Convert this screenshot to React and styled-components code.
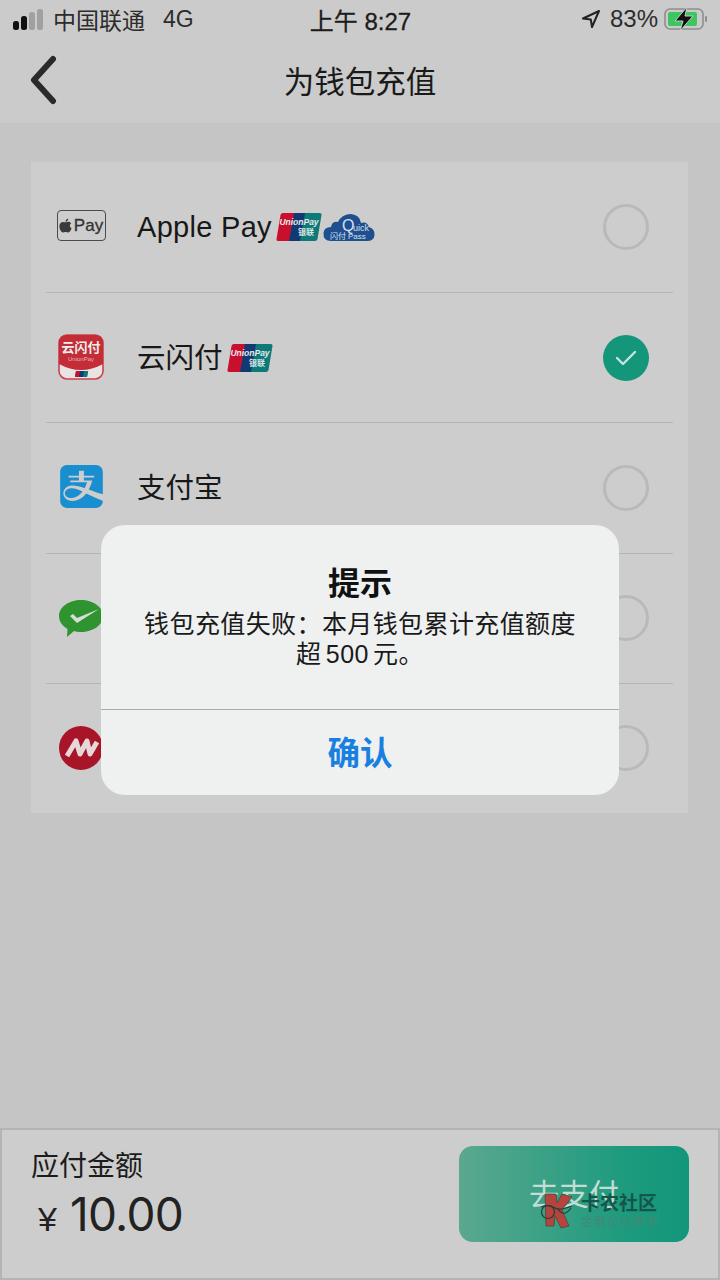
import React from 'react'
import styled, { createGlobalStyle } from 'styled-components'
import { SiAlipay } from 'react-icons/si'

const Global = createGlobalStyle`
    html, body { margin: 0; padding: 0; background: #c5c5c5; }
    body { font-family: "Liberation Sans", "Noto Sans CJK SC", sans-serif; }
`
const Page = styled.div`
    position: relative;
    width: 720px;
    height: 1280px;
    overflow: hidden;
    display: flex;
    flex-direction: column;
    background: #c5c5c5;
    color: #141414;
`
const Top = styled.div`
    height: 123px;
    background: #cbcbcb;
    display: flex;
    flex-direction: column;
`
const StatusBar = styled.div`
    height: 40px;
    display: grid;
    grid-template-columns: 1fr auto 1fr;
    align-items: center;
    padding: 0 12px 2px 13px;
    box-sizing: border-box;
    font-size: 23px;
    color: #2c2c2c;
`
const Carrier = styled.div`
    display: flex;
    align-items: center;
    gap: 9px;
    span + span { margin-left: 9px; }
`
const Clock = styled.div`
    font-size: 24px;
    color: #1c1c1c;
    -webkit-text-stroke: 0.3px #1c1c1c;
`
const StatusRight = styled.div`
    display: flex;
    justify-content: flex-end;
    align-items: center;
    gap: 6px;
    font-size: 24px;
    span { margin-left: 3px; }
`
const Nav = styled.div`
    flex: 1;
    position: relative;
    display: flex;
    align-items: center;
    justify-content: center;
    padding-bottom: 3px;
`
const Title = styled.div`
    font-size: 30.5px;
    color: #1a1a1a;
`
const Back = styled.svg`
    position: absolute;
    left: 28px;
    top: 15px;
`
const Main = styled.div`
    flex: 1;
    padding: 39px 32px 0 31px;
`
const Card = styled.div`
    background: #cdcdcd;
    padding: 0 15px;
`
const Row = styled.div`
    height: 130.2px;
    display: flex;
    align-items: center;
    border-top: ${p => p.first ? 'none' : '1px solid #b6b6b6'};
    padding: 0 24px 0 10px;
    box-sizing: border-box;
`
const IconSlot = styled.div`
    width: 50px;
    height: 50px;
    margin-right: 31px;
    padding-bottom: ${p => p.lift || 0}px;
    box-sizing: border-box;
    display: flex;
    align-items: center;
    justify-content: center;
`
const Label = styled.div`
    font-size: ${p => p.latin ? '29px' : '28.5px'};
    letter-spacing: ${p => p.latin ? '0.3px' : '0'};
    color: #181818;
    margin: ${p => p.latin ? '0 4px 0 0' : '0 4px 4px 0'};
`
const Badges = styled.div`
    display: flex;
    align-items: center;
    gap: 1px;
`
const Radio = styled.div`
    margin-left: auto;
    width: 46px;
    height: 46px;
    box-sizing: border-box;
    border-radius: 50%;
    border: ${p => p.on ? 'none' : '3px solid #b9b9b9'};
    background: ${p => p.on ? '#14967a' : 'transparent'};
    display: flex;
    align-items: center;
    justify-content: center;
`
const PayBadge = styled.div`
    flex: none;
    width: 49px;
    height: 31px;
    box-sizing: border-box;
    border: 1.5px solid #4a4a4a;
    border-radius: 4px;
    display: flex;
    align-items: center;
    justify-content: center;
    gap: 2px;
    font-size: 17px;
    color: #333;
    -webkit-text-stroke: 0.3px #333;
`
const Footer = styled.div`
    height: 152px;
    box-sizing: border-box;
    background: #cdcdcd;
    border: 2px solid #b4b4b4;
    display: flex;
    align-items: flex-start;
    justify-content: space-between;
    padding: 16px 29px 0 29px;
`
const Amounts = styled.div`
    display: flex;
    flex-direction: column;
    padding-top: 2px;
`
const AmountLabel = styled.div`
    font-size: 28px;
    color: #1c1c1c;
    line-height: 38px;
`
const Amount = styled.div`
    display: flex;
    align-items: baseline;
    padding-left: 7px;
    gap: 13px;
    line-height: 56px;
    color: #222;
`
const Yen = styled.span`
    font-size: 34px;
`
const Value = styled.span`
    font-family: "Inter", "Liberation Sans", sans-serif;
    font-size: 46px;
    letter-spacing: -0.7px;
`
const PayButton = styled.div`
    width: 230px;
    height: 96px;
    box-sizing: border-box;
    padding-bottom: 4px;
    border-radius: 14px;
    background: linear-gradient(90deg, #5aa88f 0%, #1f9b7e 70%, #12967a 100%);
    color: #c3dcd4;
    font-size: 30px;
    display: flex;
    align-items: center;
    justify-content: center;
`
const Dialog = styled.div`
    position: absolute;
    left: 101px;
    top: 525px;
    width: 518px;
    height: 270px;
    border-radius: 24px;
    background: #eff1f1;
    display: flex;
    flex-direction: column;
`
const DialogBody = styled.div`
    height: 185px;
    border-bottom: 1px solid #a9a9a9;
    text-align: center;
    padding-top: 36px;
    box-sizing: border-box;
`
const DialogTitle = styled.div`
    font-size: 32px;
    font-weight: bold;
    line-height: 46px;
    margin-bottom: 2px;
    color: #111;
`
const DialogText = styled.div`
    font-size: 25px;
    line-height: 30px;
    letter-spacing: 0.4px;
    word-spacing: -3px;
    color: #1a1a1a;
`
const Confirm = styled.div`
    flex: 1;
    display: flex;
    align-items: center;
    justify-content: center;
    padding-bottom: 4px;
    font-size: 32.5px;
    font-weight: bold;
    color: #1a80e0;
`
const Watermark = styled.div`
    position: absolute;
    left: 540px;
    top: 1193px;
    display: flex;
    align-items: center;
    gap: 7px;
`
const WatermarkText = styled.div`
    display: flex;
    flex-direction: column;
    gap: 1px;
`
const WatermarkName = styled.div`
    font-size: 19px;
    font-weight: bold;
    line-height: 20px;
    color: #14564a;
`
const WatermarkSub = styled.div`
    font-size: 12px;
    letter-spacing: 1px;
    line-height: 14px;
    color: #3f8a75;
`

const Signal = () => (
    <svg width="31" height="21" viewBox="0 0 31 21">
        <rect x="0" y="12" width="6" height="9" rx="2.5" fill="#111" />
        <rect x="8" y="7" width="6" height="14" rx="2.5" fill="#111" />
        <rect x="16" y="3" width="6" height="18" rx="2.5" fill="#a0a0a0" />
        <rect x="24" y="0" width="6" height="21" rx="2.5" fill="#a0a0a0" />
    </svg>
)

const LocationArrow = () => (
    <svg width="20" height="20" viewBox="0 0 20 20" fill="none">
        <path d="M18 2 L2 9.5 L9.8 10.5 L11 18 Z" stroke="#222" strokeWidth="2" strokeLinejoin="round" />
    </svg>
)

const Battery = () => (
    <svg width="44" height="24" viewBox="0 0 44 24">
        <rect x="1" y="2" width="38" height="20" rx="5" fill="none" stroke="#8e8e8e" strokeWidth="1.6" />
        <rect x="4" y="5" width="29" height="14" rx="2" fill="#3cc65f" />
        <rect x="41" y="9" width="2" height="6" rx="1" fill="#8e8e8e" />
        <path d="M23 0 L11 14 L19 14 L16 24 L29 9 L21 9 Z" fill="#111" stroke="#cbcbcb" strokeWidth="1" />
    </svg>
)

const Check = () => (
    <svg width="22" height="16" viewBox="0 0 22 16" fill="none">
        <path d="M2 8 L8 14 L20 2" stroke="#c5e5dc" strokeWidth="2.4" strokeLinecap="round" strokeLinejoin="round" />
    </svg>
)

const UnionPay = () => (
    <svg width="46" height="30" viewBox="0 0 46 30">
        <path d="M7 1 H20 L15 29 H2 Q0 29 0.5 27 L4.5 3 Q5 1 7 1 Z" fill="#c8102e" />
        <path d="M18 1 H31 L26 29 H13 Z" fill="#123a72" />
        <path d="M29 1 H43 Q46 1 45.5 3 L41.5 27 Q41 29 39 29 H24 Z" fill="#0e7a78" />
        <text x="23" y="13" textAnchor="middle" fontSize="8.5" fontWeight="bold" fontStyle="italic" fill="#e9e9e9" fontFamily="Liberation Sans">UnionPay</text>
        <text x="30" y="23" textAnchor="middle" fontSize="8" fontWeight="bold" fill="#dfe7e7" fontFamily="Noto Sans CJK SC">银联</text>
    </svg>
)

const QuickPass = () => (
    <svg width="52" height="29" viewBox="0 0 52 29">
        <path d="M8 28 Q0 28 0.5 20 Q1 14 8 14 Q9 8 15 9 Q19 1 28 1 Q37 2 38 10 Q44 8 46 14 Q52 16 51.5 22 Q51 28 44 28 Z" fill="#1f4f8f" />
        <text x="19" y="18" fontSize="16" fill="#d5e0ee" fontFamily="Liberation Sans">Q</text>
        <text x="30" y="18" fontSize="9" fill="#d5e0ee" fontFamily="Liberation Sans">uick</text>
        <text x="7" y="26" fontSize="8" fill="#d5e0ee" fontFamily="Noto Sans CJK SC">闪付</text>
        <text x="25" y="26" fontSize="8" fill="#d5e0ee" fontFamily="Liberation Sans">Pass</text>
    </svg>
)

const AppleMark = () => (
    <svg width="13" height="15" viewBox="0 0 14 16">
        <path d="M10 0.5 C10 2.5 8.5 4 7 4 C7 2.2 8.4 0.8 10 0.5 Z M7 4.6 C8 4.6 9 4 10.2 4 C11.5 4 12.5 4.7 13.2 5.6 C11 7 11.4 10 13.6 11 C13 12.8 11.6 15.5 10 15.5 C9 15.5 8.4 14.9 7.2 14.9 C6 14.9 5.3 15.5 4.4 15.5 C2.6 15.5 0.4 11.8 0.4 8.8 C0.4 5.8 2.3 4.1 4.2 4.1 C5.3 4.1 6.2 4.6 7 4.6 Z" fill="#3a3a3a" />
    </svg>
)

const CloudPayIcon = () => (
    <svg width="46" height="46" viewBox="0 0 46 46">
        <rect x="1" y="1" width="44" height="44" rx="8" fill="#e9e4e4" stroke="#c9434c" strokeWidth="1.6" />
        <path d="M1 9 Q1 1 9 1 H37 Q45 1 45 9 V30 Q34 36 23 36 Q12 36 1 30 Z" fill="#c42c37" />
        <text x="23" y="18" textAnchor="middle" fontSize="13" fontWeight="bold" fill="#eee" fontFamily="Noto Sans CJK SC">云闪付</text>
        <text x="23" y="27" textAnchor="middle" fontSize="6" fill="#e6b5b8" fontFamily="Liberation Sans">UnionPay</text>
        <path d="M18 37 H30 L29 43 H17 Z" fill="#123a72" />
        <path d="M18 37 H22 L21 43 H17 Z" fill="#c8102e" />
        <path d="M26 37 H30 L29 43 H25 Z" fill="#0e7a78" />
    </svg>
)

const AlipayIcon = () => (
    <SiAlipay size={43} color="#1a8fd0" />
)

const WechatPayIcon = () => (
    <svg width="44" height="44" viewBox="0 -3 44 44">
        <path d="M22 1 C34 1 44 8 44 17 C44 26 34 33 22 33 C19.5 33 17 32.7 15 32 L8 38 L8.5 30 C3.5 27 0 22.5 0 17 C0 8 10 1 22 1 Z" fill="#2f932f" />
        <path d="M11 17 L18 24 L40 10 L18 19 L14 15 Z" fill="#d6ded6" />
    </svg>
)

const RedCircleIcon = () => (
    <svg width="44" height="44" viewBox="0 0 44 44">
        <circle cx="22" cy="22" r="22" fill="#a81428" />
        <path d="M8 30 L17 15 L21 28 L28 15 L31 28 L38 16" fill="none" stroke="#e6d8d8" strokeWidth="5" strokeLinejoin="round" />
    </svg>
)

const KLogo = () => (
    <svg width="34" height="36" viewBox="0 0 34 36">
        <path d="M5 1 L16 1 L17 10 L22 1 L32 4 L22 17 L29 33 L21 35 L15 23 L14 33 L6 33 Z" fill="#b5443f" stroke="#4a4a3a" strokeWidth="0.8" />
        <path d="M1 14 Q8 11 15 15 Q19 18 32 13" fill="none" stroke="#20403a" strokeWidth="1.2" />
        <circle cx="8" cy="19" r="6.5" fill="none" stroke="#20403a" strokeWidth="1.2" />
        <path d="M18 16 Q24 25 31 15" fill="none" stroke="#20403a" strokeWidth="1.2" />
    </svg>
)

const methods = [
    { id: 'apple', icon: <PayBadge><AppleMark />Pay</PayBadge>, lift: 3, label: 'Apple Pay', latin: true, badges: [<UnionPay key="u" />, <QuickPass key="q" />] },
    { id: 'cloud', icon: <CloudPayIcon />, lift: 2, label: '云闪付', on: true, badges: [<UnionPay key="u" />] },
    { id: 'ali', icon: <AlipayIcon />, lift: 3, label: '支付宝' },
    { id: 'wechat', icon: <WechatPayIcon /> },
    { id: 'red', icon: <RedCircleIcon /> },
]

function App() {
    return (
        <Page>
            <Global />
            <Top>
                <StatusBar>
                    <Carrier>
                        <Signal />
                        <span>中国联通</span>
                        <span>4G</span>
                    </Carrier>
                    <Clock>上午 8:27</Clock>
                    <StatusRight>
                        <LocationArrow />
                        <span>83%</span>
                        <Battery />
                    </StatusRight>
                </StatusBar>
                <Nav>
                    <Back width="30" height="50" viewBox="0 0 30 50" fill="none">
                        <path d="M25 4 L6 25 L25 46" stroke="#2a2a2a" strokeWidth="6" strokeLinecap="round" strokeLinejoin="round" />
                    </Back>
                    <Title>为钱包充值</Title>
                </Nav>
            </Top>
            <Main>
                <Card>
                    {methods.map((m, i) => (
                        <Row key={m.id} first={i === 0}>
                            <IconSlot lift={m.lift}>{m.icon}</IconSlot>
                            {m.label && <Label latin={m.latin}>{m.label}</Label>}
                            {m.badges && <Badges>{m.badges}</Badges>}
                            <Radio on={m.on}>{m.on && <Check />}</Radio>
                        </Row>
                    ))}
                </Card>
            </Main>
            <Footer>
                <Amounts>
                    <AmountLabel>应付金额</AmountLabel>
                    <Amount>
                        <Yen>¥</Yen>
                        <Value>10.00</Value>
                    </Amount>
                </Amounts>
                <PayButton>去支付</PayButton>
            </Footer>
            <Dialog>
                <DialogBody>
                    <DialogTitle>提示</DialogTitle>
                    <DialogText>钱包充值失败：本月钱包累计充值额度</DialogText>
                    <DialogText>超 500 元。</DialogText>
                </DialogBody>
                <Confirm>确认</Confirm>
            </Dialog>
            <Watermark>
                <KLogo />
                <WatermarkText>
                    <WatermarkName>卡农社区</WatermarkName>
                    <WatermarkSub>金融在线教育</WatermarkSub>
                </WatermarkText>
            </Watermark>
        </Page>
    )
}

export default App
